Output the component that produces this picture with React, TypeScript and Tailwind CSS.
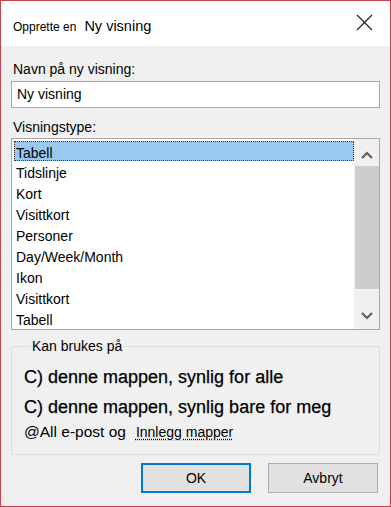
import React from "react";

const items = [
  "Tabell",
  "Tidslinje",
  "Kort",
  "Visittkort",
  "Personer",
  "Day/Week/Month",
  "Ikon",
  "Visittkort",
  "Tabell",
];

export default function App() {
  return (
    <div
      className="w-[391px] h-[507px] border border-[#c4434e] bg-[#f0f0f0] flex flex-col text-black overflow-hidden"
      style={{ fontFamily: '"Liberation Sans", Arial, sans-serif' }}
    >
      {/* Title bar */}
      <div className="h-[45px] bg-white flex items-center pl-[12px] pr-[17px] shrink-0">
        <span className="text-[12px] leading-none mt-[6px]">Opprette en</span>
        <span className="text-[14.5px] leading-none ml-[8px] mt-[6px]">Ny visning</span>
        <div className="flex-1" />
        <svg width="17" height="17" viewBox="0 0 17 17" className="mt-[-2px]">
          <path d="M1 1 L16 16 M16 1 L1 16" stroke="#222" strokeWidth="1.2" fill="none" />
        </svg>
      </div>

      {/* Body */}
      <div className="flex flex-col px-[10px] pt-[15px]">
        <div className="text-[14px] leading-[16px] pl-[2px]">Navn på ny visning:</div>
        <div className="mt-[4px] h-[27px] bg-white border border-[#a8a8a8] flex items-center pl-[5px] text-[14px]">
          Ny visning
        </div>

        <div className="text-[14px] leading-[16px] pl-[2px] mt-[11px]">Visningstype:</div>
        <div className="mt-[3px] h-[192px] bg-white border border-[#a8a8a8] flex">
          <div className="flex-1 flex flex-col pt-[2px] pl-[2px]">
            {items.map((it, i) => (
              <div
                key={i}
                className={
                  i === 0
                    ? "h-[20px] mb-[1px] bg-[#99c9ef] border border-dotted border-[#333] pl-[1px] text-[14px] leading-[22px]"
                    : "h-[21px] pl-[2px] text-[14px] leading-[23px]"
                }
              >
                {it}
              </div>
            ))}
          </div>
          <div className="w-[25px] bg-[#f0f0f0] flex flex-col items-center">
            <div className="h-[27px] w-full flex items-center justify-center pt-[4px]">
              <svg width="12" height="8" viewBox="0 0 12 8">
                <path d="M1 7 L6 2 L11 7" stroke="#606060" strokeWidth="2.2" fill="none" />
              </svg>
            </div>
            <div className="h-[123px] w-[24px] bg-[#cdcdcd]" />
            <div className="flex-1" />
            <div className="h-[27px] w-full flex items-center justify-center">
              <svg width="12" height="8" viewBox="0 0 12 8">
                <path d="M1 1 L6 6 L11 1" stroke="#606060" strokeWidth="2.2" fill="none" />
              </svg>
            </div>
          </div>
        </div>

        {/* Group box */}
        <fieldset className="mt-[8px] h-[117px] border border-[#dcdcdc] px-[12px] rounded-[2px]">
          <legend className="ml-[6px] px-[2px] text-[14px] leading-[16px]">Kan brukes på</legend>
          <div className="text-[18px] leading-[20px] mt-[13px] [-webkit-text-stroke:0.25px_black]">C) denne mappen, synlig for alle</div>
          <div className="text-[18px] leading-[20px] mt-[10px] [-webkit-text-stroke:0.25px_black]">C) denne mappen, synlig bare for meg</div>
          <div className="leading-[18px] mt-[6px] flex items-baseline">
            <span className="text-[15.5px]">@All e-post og</span>
            <span className="text-[14px] ml-[10px] underline decoration-dotted underline-offset-[2px]">Innlegg mapper</span>
          </div>
        </fieldset>

        {/* Buttons */}
        <div className="flex justify-end gap-[17px] mt-[8px] pr-[2px]">
          <button className="w-[110px] h-[30px] bg-[#e1e1e1] border-2 border-[#0078d7] text-[14px]">OK</button>
          <button className="w-[110px] h-[30px] bg-[#e1e1e1] border border-[#adadad] text-[14px]">Avbryt</button>
        </div>
      </div>
    </div>
  );
}
